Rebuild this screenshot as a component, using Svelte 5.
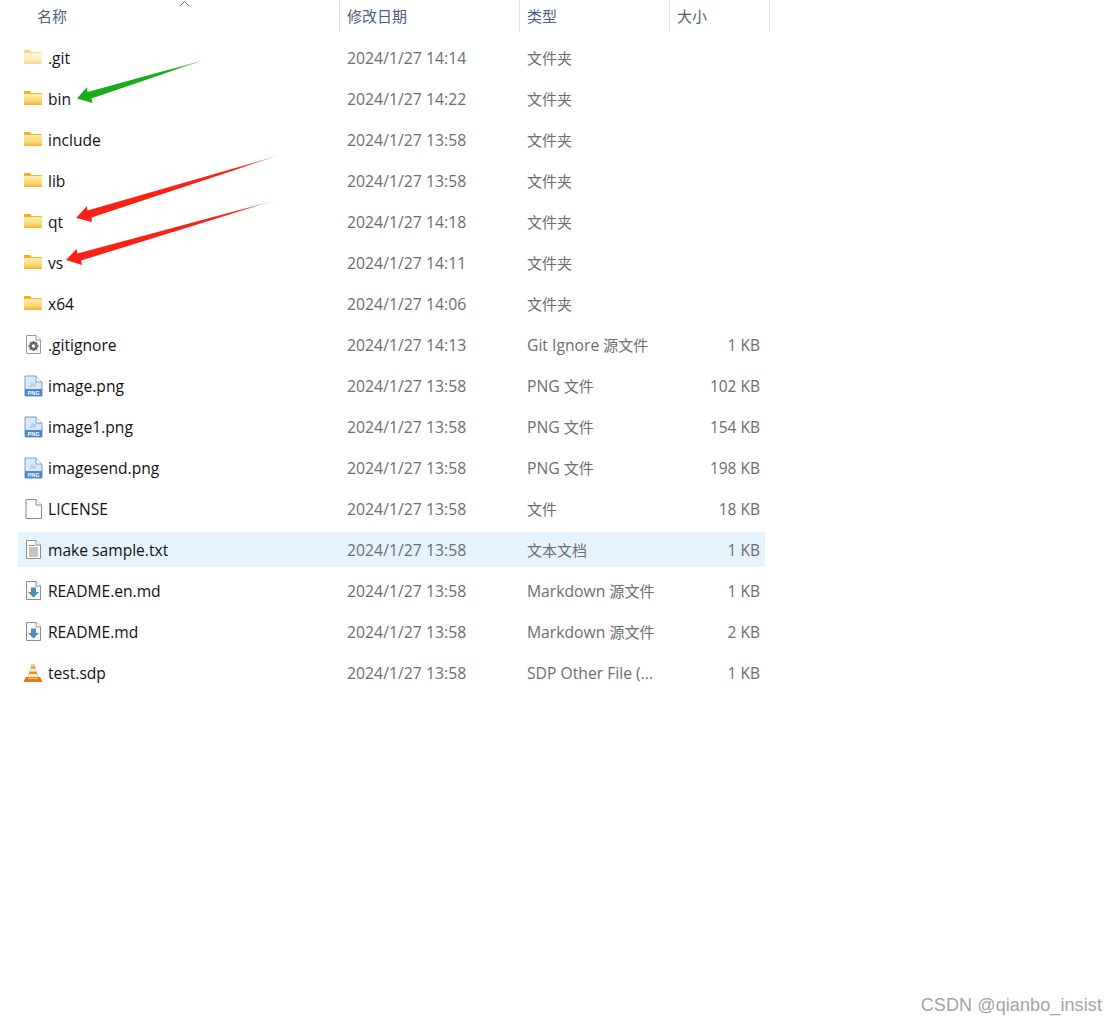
<script>
  const files = [
    { name: ".git", date: "2024/1/27 14:14", type: "文件夹", size: "", icon: "folder-faded" },
    { name: "bin", date: "2024/1/27 14:22", type: "文件夹", size: "", icon: "folder" },
    { name: "include", date: "2024/1/27 13:58", type: "文件夹", size: "", icon: "folder" },
    { name: "lib", date: "2024/1/27 13:58", type: "文件夹", size: "", icon: "folder" },
    { name: "qt", date: "2024/1/27 14:18", type: "文件夹", size: "", icon: "folder" },
    { name: "vs", date: "2024/1/27 14:11", type: "文件夹", size: "", icon: "folder" },
    { name: "x64", date: "2024/1/27 14:06", type: "文件夹", size: "", icon: "folder" },
    { name: ".gitignore", date: "2024/1/27 14:13", prefix: "Git Ignore ", type: "源文件", size: "1 KB", icon: "gear" },
    { name: "image.png", date: "2024/1/27 13:58", prefix: "PNG ", type: "文件", size: "102 KB", icon: "png" },
    { name: "image1.png", date: "2024/1/27 13:58", prefix: "PNG ", type: "文件", size: "154 KB", icon: "png" },
    { name: "imagesend.png", date: "2024/1/27 13:58", prefix: "PNG ", type: "文件", size: "198 KB", icon: "png" },
    { name: "LICENSE", date: "2024/1/27 13:58", type: "文件", size: "18 KB", icon: "blank" },
    { name: "make sample.txt", date: "2024/1/27 13:58", type: "文本文档", size: "1 KB", icon: "text", selected: true },
    { name: "README.en.md", date: "2024/1/27 13:58", prefix: "Markdown ", type: "源文件", size: "1 KB", icon: "md" },
    { name: "README.md", date: "2024/1/27 13:58", prefix: "Markdown ", type: "源文件", size: "2 KB", icon: "md" },
    { name: "test.sdp", date: "2024/1/27 13:58", prefix: "SDP Other File (...", type: "", size: "1 KB", icon: "vlc" }
  ];
</script>

{#snippet pageOutline(fill, stroke)}
  <path d="M3.5 1.5H13L17.5 6V19.5H3.5Z" fill={fill} stroke={stroke} />
  <path d="M13 1.5V6H17.5" fill="#fff" stroke={stroke} />
{/snippet}

{#snippet fileIcon(kind)}
  <svg class="icon" width="20" height="22" viewBox="0 0 20 22">
    {#if kind === "folder" || kind === "folder-faded"}
      <g opacity={kind === "folder-faded" ? 0.5 : 1}>
        <path d="M1 4C1 3.4 1.5 3 2 3H7L9 5.5H1Z" fill="#f5ae0c" />
        <rect x="1" y="5" width="18" height="12" rx="1" fill="#f5b52a" />
        <rect x="1" y="6" width="18" height="11" rx="1" fill="url(#folderFill)" />
      </g>
    {:else if kind === "gear"}
      {@render pageOutline("#fbfbfb", "#9a9a9a")}
      <circle cx="10.5" cy="12" r="3" fill="none" stroke="#5f6a70" stroke-width="2.6" />
      <path d="M10.5 7V8.5M10.5 15.5V17M5.5 12H7M14 12H15.5M7 8.5L8 9.5M13 14.5L14 15.5M14 8.5L13 9.5M8 14.5L7 15.5" stroke="#5f6a70" stroke-width="1.8" />
    {:else if kind === "png"}
      <path d="M2 1H13L19 7V21H2Z" fill="#dbe9f8" stroke="#6f9fd6" />
      <path d="M13 1V7H19" fill="#fff" stroke="#6f9fd6" />
      <path d="M6 12L9 6L11 9L13 5V12Z" fill="#b9d2ef" />
      <rect x="2" y="14" width="17" height="7" fill="#4a86cf" />
      <text x="10.5" y="20" class="png-label">PNG</text>
    {:else if kind === "blank"}
      <path d="M3 1.5H13L18.5 7V20.5H3Z" fill="#fdfdfd" stroke="#8a8a8a" />
      <path d="M13 1.5V7H18.5" fill="#fff" stroke="#8a8a8a" />
    {:else if kind === "text"}
      {@render pageOutline("#fdfdfd", "#8e8e8e")}
      <path d="M6 6.5H12M6 9H15M6 11H15M6 13H15M6 15H15M6 17H15" stroke="#8b8b8b" />
    {:else if kind === "md"}
      {@render pageOutline("#f7f9fa", "#8e8e8e")}
      <path d="M8 7.5H13V12H16L10.5 17.5L5 12H8Z" fill="#4f8fb5" />
    {:else if kind === "vlc"}
      <path d="M8.6 2.5C8.9 1.5 11.1 1.5 11.4 2.5L15.5 16H4.5Z" fill="#f58a0a" />
      <path d="M8.6 2.5C8.9 1.5 11.1 1.5 11.4 2.5L11.9 4.5H8.1Z" fill="#d9d6d2" />
      <path d="M7.6 6.5H12.4L13.2 9.5H6.8Z" fill="#f6f2ec" />
      <path d="M6 12H14L14.8 15H5.2Z" fill="#f6f2ec" />
      <path d="M3 15H5.4L5 16.5H15L14.6 15H17L19.5 20H0.5Z" fill="#e8770a" />
    {/if}
  </svg>
{/snippet}

<div class="page">
  <header class="columns">
    <div class="col-head name">
      名称
      <svg class="sort" width="11" height="7" viewBox="0 0 11 7">
        <path d="M1 6L5.5 1.5L10 6" fill="none" stroke="#777" />
      </svg>
    </div>
    <div class="col-head date">修改日期</div>
    <div class="col-head type">类型</div>
    <div class="col-head size">大小</div>
  </header>

  <div class="rows">
    {#each files as f}
      <div class="row" class:selected={f.selected}>
        <div class="cell-name">
          {@render fileIcon(f.icon)}
          <span>{f.name}</span>
        </div>
        <div class="cell cell-date">{f.date}</div>
        <div class="cell"><span class="latin">{f.prefix ?? ""}</span>{f.type}</div>
        <div class="cell cell-size">{f.size}</div>
      </div>
    {/each}
  </div>

  <svg class="arrows" width="1117" height="300" viewBox="0 0 1117 300">
    <defs>
      <linearGradient id="folderFill" x1="0" y1="0" x2="0" y2="1">
        <stop offset="0" stop-color="#ffeeb0" />
        <stop offset="0.65" stop-color="#fdd670" />
        <stop offset="1" stop-color="#f4b02c" />
      </linearGradient>
      <linearGradient id="greenFade" gradientUnits="userSpaceOnUse" x1="100" y1="92" x2="204" y2="60">
        <stop offset="0.65" stop-color="#1bab1b" />
        <stop offset="1" stop-color="#1bab1b" stop-opacity="0.4" />
      </linearGradient>
      <linearGradient id="redFadeA" gradientUnits="userSpaceOnUse" x1="100" y1="210" x2="280" y2="155">
        <stop offset="0.75" stop-color="#fb2116" />
        <stop offset="1" stop-color="#fb2116" stop-opacity="0.4" />
      </linearGradient>
      <linearGradient id="redFadeB" gradientUnits="userSpaceOnUse" x1="90" y1="253" x2="276" y2="200">
        <stop offset="0.75" stop-color="#fb2116" />
        <stop offset="1" stop-color="#fb2116" stop-opacity="0.4" />
      </linearGradient>
    </defs>
    <path d="M77 98.5L87 87L87.5 92L204 60L91.5 98.5L92.5 103Z" fill="url(#greenFade)" />
    <path d="M76 218L87 206L87.5 210.5L280 155L91.5 217.5L92 222Z" fill="url(#redFadeA)" />
    <path d="M66 260L76.5 249L77.5 253.5L276 200L81 260.5L82 265Z" fill="url(#redFadeB)" />
  </svg>

  <div class="watermark">CSDN @qianbo_insist</div>
</div>

<style>
  :global(body) {
    margin: 0;
    background: #fff;
  }

  .page {
    position: relative;
    height: 1024px;
    overflow: hidden;
    font-family: "Open Sans", "Noto Sans CJK SC", sans-serif;
    font-size: 15px;
  }

  .columns {
    display: grid;
    grid-template-columns: 340px 180px 150px 100px;
    width: 770px;
    height: 32px;
  }

  .col-head {
    position: relative;
    display: flex;
    align-items: center;
    box-sizing: border-box;
    height: 32px;
    padding: 0 0 2px 7px;
    border-right: 1px solid #e5e5e5;
    color: #4c607a;
    font-size: 15px;
  }

  .col-head.name {
    padding-left: 37px;
  }

  .sort {
    position: absolute;
    left: 179px;
    top: 0;
  }

  .rows {
    display: flex;
    flex-direction: column;
    gap: 6px;
    margin: 8px 0 0 18px;
    width: 747px;
  }

  .row {
    display: grid;
    grid-template-columns: 322px 180px 150px 95px;
    align-items: center;
    height: 35px;
    color: #6d6d6d;
  }

  .row.selected {
    background: #e5f3ff;
  }

  .cell-name {
    display: flex;
    align-items: center;
    gap: 5px;
    padding-left: 5px;
    color: #111;
    font-size: 15.6px;
  }

  .cell {
    padding-left: 7px;
    white-space: nowrap;
  }

  .cell-date {
    font-size: 15.8px;
  }

  .latin {
    font-size: 15.7px;
  }

  .cell-size {
    padding: 0 5px 0 0;
    text-align: right;
    font-size: 15.5px;
  }

  .icon {
    flex: none;
  }

  .png-label {
    font-family: "Liberation Sans", sans-serif;
    font-size: 5.5px;
    font-weight: 700;
    text-anchor: middle;
    fill: #fff;
  }

  .arrows {
    position: absolute;
    left: 0;
    top: 0;
    pointer-events: none;
  }

  .watermark {
    position: absolute;
    right: 15px;
    top: 995px;
    color: #a3a3a3;
    font-family: "Liberation Sans", sans-serif;
    font-size: 18px;
    letter-spacing: 0.1px;
  }
</style>
